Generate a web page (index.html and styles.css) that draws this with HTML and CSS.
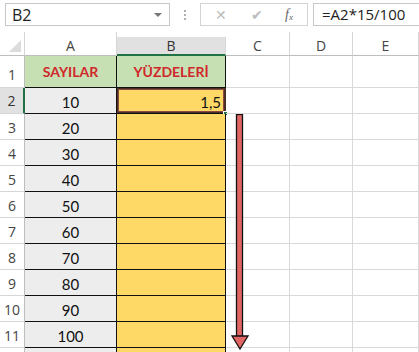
FILE: index.html
```html
<!DOCTYPE html>
<html>
<head>
<meta charset="utf-8">
<link rel="stylesheet" href="styles.css">
</head>
<body>
<div class="app">
  <div class="fbar">
    <div class="namebox"><span class="nb-text">B2</span><span class="nb-arrow"></span></div>
    <div class="dots"><span></span><span></span><span></span></div>
    <div class="btns">
      <span class="btn x">&#x2715;</span>
      <span class="btn ok">&#x2714;</span>
      <span class="btn fx">f<sub>x</sub></span>
    </div>
    <div class="formula">=A2*15/100</div>
  </div>
  <div class="sheet">
    <div class="grid">
      <div class="hd corner"><span class="tri"></span></div>
      <div class="hd col">A</div>
      <div class="hd col sel">B</div>
      <div class="hd col">C</div>
      <div class="hd col">D</div>
      <div class="hd col">E</div>

      <div class="rh r1">1</div>
      <div class="c title">SAYILAR</div>
      <div class="c title tb">YÜZDELERİ</div>
      <div class="c"></div><div class="c"></div><div class="c"></div>

      <div class="rh rsel">2</div>
      <div class="c num">10</div>
      <div class="c yel active">1,5<span class="handle"></span></div>
      <div class="c"></div><div class="c"></div><div class="c"></div>

      <div class="rh">3</div><div class="c num">20</div><div class="c yel"></div><div class="c"></div><div class="c"></div><div class="c"></div>
      <div class="rh">4</div><div class="c num">30</div><div class="c yel"></div><div class="c"></div><div class="c"></div><div class="c"></div>
      <div class="rh">5</div><div class="c num">40</div><div class="c yel"></div><div class="c"></div><div class="c"></div><div class="c"></div>
      <div class="rh">6</div><div class="c num">50</div><div class="c yel"></div><div class="c"></div><div class="c"></div><div class="c"></div>
      <div class="rh">7</div><div class="c num">60</div><div class="c yel"></div><div class="c"></div><div class="c"></div><div class="c"></div>
      <div class="rh">8</div><div class="c num">70</div><div class="c yel"></div><div class="c"></div><div class="c"></div><div class="c"></div>
      <div class="rh">9</div><div class="c num">80</div><div class="c yel"></div><div class="c"></div><div class="c"></div><div class="c"></div>
      <div class="rh">10</div><div class="c num">90</div><div class="c yel"></div><div class="c"></div><div class="c"></div><div class="c"></div>
      <div class="rh">11</div><div class="c num">100</div><div class="c yel"></div><div class="c"></div><div class="c"></div><div class="c"></div>
      <div class="rh"></div><div class="c num"></div><div class="c yel"></div><div class="c"></div><div class="c"></div><div class="c"></div>
    </div>
    <svg class="arrow" width="20" height="240" viewBox="0 0 20 240">
      <rect x="5.5" y="0.5" width="6" height="222" fill="#e06666" stroke="#111" stroke-width="1.3"/>
      <polygon points="1,222 17,222 9,235" fill="#e06666" stroke="#111" stroke-width="1.3" stroke-linejoin="miter"/>
    </svg>
  </div>
</div>
</body>
</html>
```
FILE: styles.css
```css
* { box-sizing: border-box; }
html, body { margin: 0; padding: 0; background: #fff; }
body { width: 419px; height: 352px; overflow: hidden; font-family: "Open Sans", "Noto Sans", sans-serif; }
.app { width: 419px; height: 352px; overflow: hidden; }

.fbar { height: 32px; display: flex; align-items: flex-start; padding-top: 3px; }
.namebox { margin-left: 5px; width: 165px; height: 23px; border: 1px solid #c8c8c8; display: flex; align-items: center; justify-content: space-between; padding: 0 7px 0 6px; }
.nb-text { font-size: 16px; color: #222; font-family: "Open Sans", sans-serif; }
.nb-arrow { width: 0; height: 0; border-left: 4px solid transparent; border-right: 4px solid transparent; border-top: 4px solid #777; }
.dots { width: 30px; height: 23px; display: flex; flex-direction: column; align-items: center; justify-content: center; gap: 2px; }
.dots span { width: 2px; height: 2px; background: #b0b0b0; }
.btns { width: 108px; height: 23px; border: 1px solid #d4d4d4; display: flex; align-items: center; }
.btn { color: #bcbcbc; font-size: 14px; text-align: center; }
.btn.x { width: 40px; font-size: 14px; }
.btn.ok { width: 32px; font-size: 14px; }
.btn.fx { width: 32px; font-family: "Liberation Serif", serif; font-style: italic; color: #666; font-size: 14px; }
.btn.fx sub { font-size: 9px; vertical-align: -1px; }
.formula { margin-left: 5px; flex: 1; height: 23px; border: 1px solid #c8c8c8; border-right: none; font-size: 15px; color: #222; padding-left: 8px; line-height: 21px; }

.sheet { position: relative; }
.grid { display: grid; grid-template-columns: 25px 92px 109px 64px 63px 66px; grid-template-rows: 24px 32px repeat(11, 26px); }
.hd { border-right: 1px solid #d6d6d6; border-bottom: 1px solid #bdbdbd; background: #fff; font-size: 14px; color: #444; display: flex; align-items: center; justify-content: center; padding-top: 4px; }
.hd.sel { background: #e1e1e1; border-bottom: 2px solid #217346; color: #333; margin-top: 5px; padding-top: 0; }
.corner { position: relative; }
.tri { position: absolute; right: 3px; bottom: 3px; width: 0; height: 0; border-left: 12px solid transparent; border-bottom: 12px solid #dcdcdc; }
.rh { border-right: 1px solid #bdbdbd; border-bottom: 1px solid #d6d6d6; font-size: 14px; color: #444; display: flex; align-items: flex-end; justify-content: center; padding-bottom: 2px; }
.rh.rsel { background: #e1e1e1; border-right: 2px solid #217346; color: #333; align-items: center; padding-bottom: 0; }
.rh.r1 { padding-bottom: 3px; }
.c { border-right: 1px solid #d9d9d9; border-bottom: 1px solid #d9d9d9; font-family: "Lato", "Open Sans", sans-serif; font-size: 15px; color: #111; display: flex; align-items: center; justify-content: center; position: relative; }
.title { background: #c6e0b4; color: #d0282a; font-weight: bold; font-size: 14px; border-right: 1px solid #111; border-bottom: 1px solid #111; }
.num { background: #ededed; border-right: 1px solid #111; border-bottom: 1px solid #111; padding-top: 2px; }
.yel { background: #ffd966; border-right: 1px solid #111; border-bottom: 1px solid #111; }
.active { justify-content: flex-end; padding-right: 4px; padding-top: 2px; box-shadow: inset 0 0 0 1px #4a3026, inset 0 0 0 2px #8e4a3c; border-right: 1px solid #4a3026; }
.handle { position: absolute; right: -3px; bottom: -3px; width: 5px; height: 5px; background: #217346; border: 1px solid #fff; }
.arrow { position: absolute; left: 231px; top: 82px; }
```
